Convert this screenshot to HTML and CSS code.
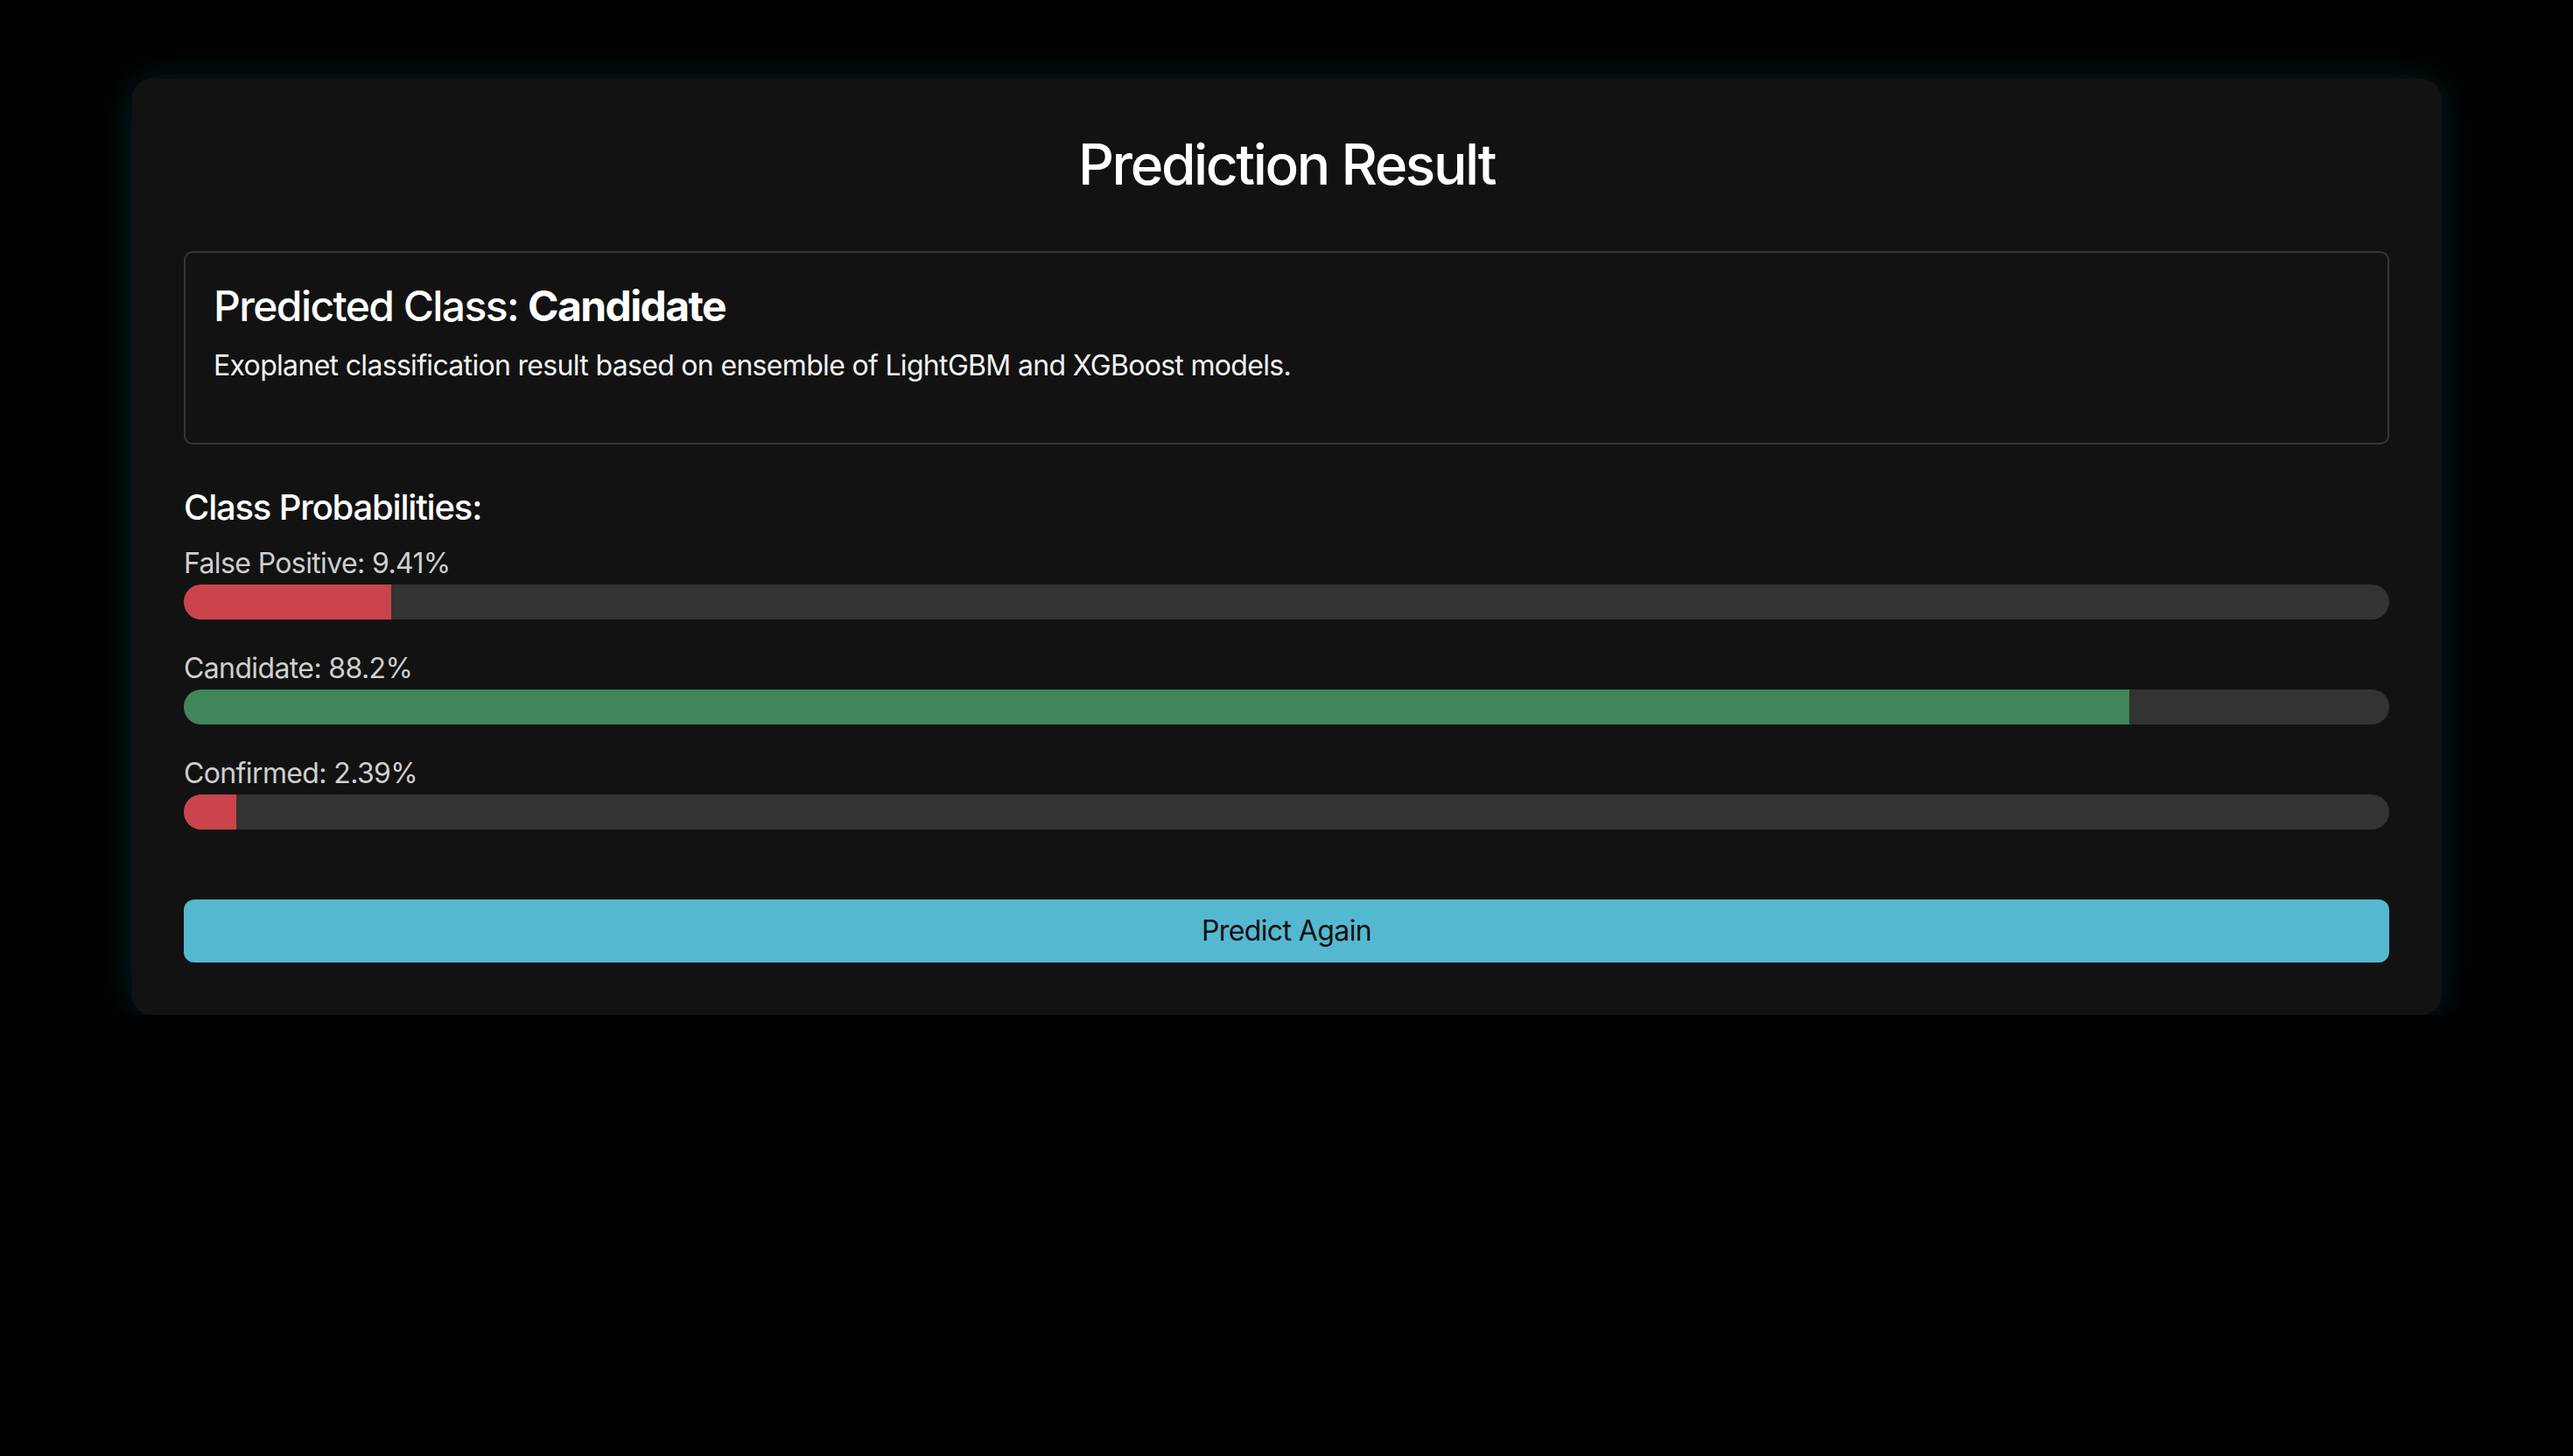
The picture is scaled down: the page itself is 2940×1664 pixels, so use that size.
FILE: index.html
```html
<!DOCTYPE html>
<html lang="en">
<head>
<meta charset="utf-8">
<title>Prediction Result</title>
<link rel="stylesheet" href="styles.css">
</head>
<body>
<main class="card">
  <h2 class="title">Prediction Result</h2>
  <section class="result-box">
    <h3 class="result-heading">Predicted Class: <strong>Candidate</strong></h3>
    <p class="result-text">Exoplanet classification result based on ensemble of LightGBM and XGBoost models.</p>
  </section>
  <h5 class="prob-heading">Class Probabilities:</h5>
  <div class="prob-list">
    <div class="prob-item">
      <div class="prob-label">False Positive: 9.41%</div>
      <div class="track"><div class="fill fill-red" style="width:9.41%"></div></div>
    </div>
    <div class="prob-item">
      <div class="prob-label">Candidate: 88.2%</div>
      <div class="track"><div class="fill fill-green" style="width:88.2%"></div></div>
    </div>
    <div class="prob-item">
      <div class="prob-label">Confirmed: 2.39%</div>
      <div class="track"><div class="fill fill-red" style="width:2.39%"></div></div>
    </div>
  </div>
  <button class="btn-again" type="button">Predict Again</button>
</main>
</body>
</html>
```

FILE: styles.css
```css
* {
  box-sizing: border-box;
}

html, body {
  margin: 0;
  padding: 0;
  background: #000;
}

body {
  font-family: Inter, "Noto Sans", "Liberation Sans", sans-serif;
  color: #fff;
  padding-top: 90px;
}

.card {
  width: 2640px;
  margin: 0 auto;
  background: #121212;
  border-radius: 24px;
  padding: 60px;
  box-shadow: 0 0 40px rgba(23, 162, 184, 0.2);
  display: flex;
  flex-direction: column;
}

.title {
  margin: 0 0 60px;
  font-size: 64px;
  font-weight: 500;
  line-height: 1.2;
  letter-spacing: -2.4px;
  text-align: center;
  color: #fff;
}

.result-box {
  border: 2px solid #363636;
  border-radius: 10px;
  padding: 32px;
  margin-bottom: 48px;
}

.result-heading {
  margin: 0 0 16px;
  font-size: 48px;
  font-weight: 500;
  line-height: 1.2;
  letter-spacing: -1.6px;
  color: #fff;
}

.result-heading strong {
  font-weight: 700;
}

.result-text {
  margin: 0 0 32px;
  font-size: 32px;
  line-height: 1.5;
  letter-spacing: -0.68px;
  color: #f2f2f2;
}

.prob-heading {
  margin: 0 0 16px;
  font-size: 40px;
  font-weight: 500;
  line-height: 1.2;
  letter-spacing: -1.2px;
  color: #fff;
}

.prob-list {
  display: flex;
  flex-direction: column;
  gap: 32px;
}

.prob-label {
  font-size: 32px;
  line-height: 1.5;
  letter-spacing: -0.62px;
  color: #cfcfcf;
}

.track {
  height: 40px;
  background: #333;
  border-radius: 20px;
  overflow: hidden;
}

.fill {
  height: 100%;
}

.fill-red {
  background: #cb444b;
}

.fill-green {
  background: #41855a;
}

.btn-again {
  margin-top: 80px;
  height: 72px;
  border: none;
  border-radius: 12px;
  background: #55b8d1;
  color: #111;
  font-family: inherit;
  font-size: 32px;
  line-height: 48px;
  letter-spacing: -0.6px;
  padding: 12px 24px;
  cursor: pointer;
}
```
